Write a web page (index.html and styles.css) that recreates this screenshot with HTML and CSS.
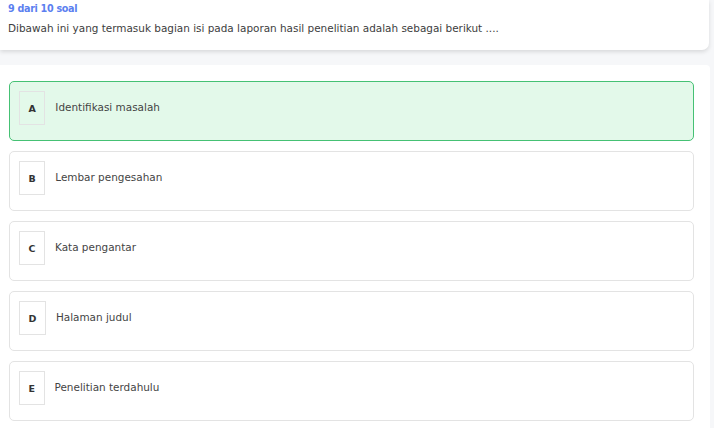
FILE: index.html
```html
<!DOCTYPE html>
<html>
<head>
<meta charset="utf-8">
<link rel="stylesheet" href="styles.css">
</head>
<body>
<header class="head">
  <div class="count">9 dari 10 soal</div>
  <div class="question">Dibawah ini yang termasuk bagian isi pada laporan hasil penelitian adalah sebagai berikut ....</div>
</header>
<main class="options">
  <div class="opt selected"><span class="key">A</span><span class="label">Identifikasi masalah</span></div>
  <div class="opt"><span class="key">B</span><span class="label">Lembar pengesahan</span></div>
  <div class="opt"><span class="key">C</span><span class="label">Kata pengantar</span></div>
  <div class="opt"><span class="key">D</span><span class="label">Halaman judul</span></div>
  <div class="opt"><span class="key">E</span><span class="label">Penelitian terdahulu</span></div>
</main>
</body>
</html>
```
FILE: styles.css
```css
html, body {
  margin: 0;
  padding: 0;
  background: #f6f7f9;
  font-family: "DejaVu Sans", "Noto Sans", sans-serif;
  color: #444;
}
.head {
  width: 709px;
  box-sizing: border-box;
  background: #fff;
  border-bottom-right-radius: 7px;
  box-shadow: 0 2px 4px rgba(0,0,0,0.12);
  padding: 1px 8px 0;
  height: 50px;
}
.count {
  color: #5b7ff0;
  font-weight: 700;
  font-size: 9.6px;
  line-height: 16px;
  letter-spacing: -0.3px;
}
.question {
  margin-top: 3px;
  font-size: 10.45px;
  line-height: 16px;
  color: #3d3d3d;
}
.options {
  margin-top: 15px;
  width: 710px;
  box-sizing: border-box;
  background: #fff;
  border-top-right-radius: 4px;
  padding: 16px 16px 10px 9px;
  display: flex;
  flex-direction: column;
  gap: 10px;
}
.opt {
  height: 60px;
  box-sizing: border-box;
  border: 1px solid #e3e3e3;
  border-radius: 5px;
  padding: 9px 9px;
  display: flex;
  align-items: flex-start;
  gap: 10px;
  background: #fff;
}
.opt.selected {
  background: #e3f9ea;
  border-color: #45c174;
}
.key {
  border: 1px solid #e3e3e3;
  height: 34px;
  box-sizing: border-box;
  padding: 0 8.5px;
  display: flex;
  align-items: center;
  font-weight: 700;
  font-size: 9.5px;
  color: #333;
}
.label {
  font-size: 10.45px;
  line-height: 16px;
  padding-top: 8px;
  color: #444;
}
```
